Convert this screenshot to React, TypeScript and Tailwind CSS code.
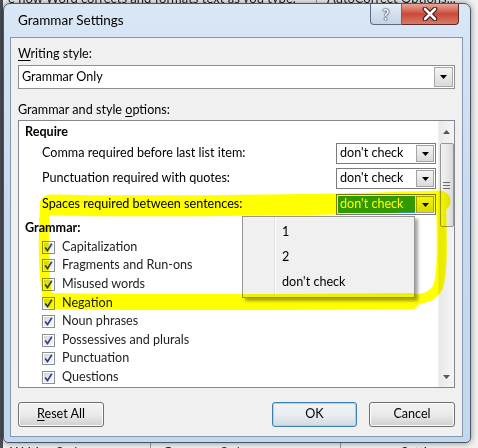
import React from 'react';

const items = [
  'Capitalization',
  'Fragments and Run-ons',
  'Misused words',
  'Negation',
  'Noun phrases',
  'Possessives and plurals',
  'Punctuation',
  'Questions',
  'Relative clauses',
];

function Tri() {
  return (
    <svg width="7" height="4" viewBox="0 0 7 4">
      <path d="M0 0h7L3.5 4z" fill="#000" />
    </svg>
  );
}

function Combo({ selected }: { selected?: boolean }) {
  return (
    <div className="w-[100px] h-[21px] flex border border-[#7b7b7b] bg-white p-px">
      <div
        className={
          selected
            ? 'flex-1 flex items-center pl-[2px] bg-[#3399ff] text-white'
            : 'flex-1 flex items-center pl-[2px] text-black'
        }
      >
        don't check
      </div>
      <div className="w-[18px] ml-px flex items-center justify-center border border-[#a3a3a3] bg-gradient-to-b from-[#f5f5f5] to-[#dadada]">
        <Tri />
      </div>
    </div>
  );
}

function CheckRow({ label }: { label: string }) {
  return (
    <div className="h-[18.6px] flex items-center pl-[23px] gap-[7px] text-[#1e1e1e]">
      <span className="w-[13px] h-[13px] border border-[#8e8f8f] bg-white p-px flex">
        <span className="flex-1 bg-gradient-to-br from-[#d3d6da] to-[#f7f7f7] flex items-center justify-center">
          <svg width="9" height="9" viewBox="0 0 9 9">
            <path d="M1.2 4.6 L3.5 7.6 L7.8 0.8" fill="none" stroke="#2c3d8e" strokeWidth="1.6" />
          </svg>
        </span>
      </span>
      <span>{label}</span>
    </div>
  );
}

function Button({ children, primary }: { children: React.ReactNode; primary?: boolean }) {
  return (
    <button
      className={
        primary
          ? 'w-[85px] h-[25px] rounded-[3px] border border-[#3c7fb1] bg-gradient-to-b from-[#f2f2f2] via-[#e8eef2] to-[#d2dbe2] shadow-[inset_0_0_0_1px_#9fd6f3]'
          : 'w-[86px] h-[25px] rounded-[3px] border border-[#707070] bg-gradient-to-b from-[#f2f2f2] via-[#ebebeb] to-[#cfcfcf] shadow-[inset_0_0_0_1px_#fcfcfc]'
      }
    >
      {children}
    </button>
  );
}

function TitleBar() {
  return (
    <div className="h-[33px] flex items-start justify-between">
      <div className="h-full flex items-center pl-[8px] text-[13.5px] text-black">Grammar Settings</div>
      <div className="flex mr-[4px]">
        <div className="w-[32px] h-[21px] rounded-bl-[4px] border border-t-0 border-[#5b6b80] bg-gradient-to-b from-[#e6eef7] via-[#d3dfec] to-[#c4d3e4] flex items-center justify-center">
          <span className="font-bold text-[15px] leading-none text-white [text-shadow:0_0_1px_#1d2836,0_0_1px_#1d2836,0_0_2px_#3c4a5c]">?</span>
        </div>
        <div className="w-[57px] h-[21px] rounded-br-[4px] border border-t-0 border-l-0 border-[#5a2a24] bg-gradient-to-b from-[#e8a596] via-[#c8493a] to-[#d9796a] flex items-center justify-center">
          <svg width="16" height="14" viewBox="0 0 16 14">
            <path d="M3 2 L13 12 M13 2 L3 12" stroke="#3b1410" strokeWidth="4.6" strokeLinecap="round" />
            <path d="M3 2 L13 12 M13 2 L3 12" stroke="#ffffff" strokeWidth="2.6" strokeLinecap="round" />
          </svg>
        </div>
      </div>
    </div>
  );
}

function Highlight() {
  return (
    <svg
      width="478"
      height="448"
      viewBox="0 0 478 448"
      className="absolute inset-0 pointer-events-none mix-blend-multiply blur-[0.5px]"
    >
      <g fill="none" stroke="#ffff00" strokeLinecap="round" strokeLinejoin="round">
        <path d="M50 205 C 150 207, 300 205, 378 203 C 410 202, 430 201, 440 201" strokeWidth="21" />
        <path d="M45 206 C 43 240, 43 275, 48 299" strokeWidth="10" />
        <path d="M52 301 C 150 303, 300 302, 412 301" strokeWidth="16" />
        <path d="M441 196 C 442 240, 443 272, 438 287 C 433 297, 422 300, 408 300" strokeWidth="10" />
      </g>
    </svg>
  );
}

export default function App() {
  return (
    <div className="relative isolate w-[478px] h-[448px] overflow-hidden bg-[#f1f1f1] font-['Lato',sans-serif] text-[12.6px]">
      <div className="absolute left-0 right-0 top-[-11px] flex text-[#222] text-[13px] whitespace-nowrap">
        <span className="pl-[8px] w-[316px]">e how Word corrects and formats text as you type.</span>
        <span className="border-l border-[#999] pl-[10px]">AutoCorrect Options...</span>
      </div>
      <div className="absolute left-0 top-0 bottom-0 w-[3px] bg-[#4b4f57]" />
      <div className="absolute left-0 right-0 top-[443px] flex text-[#222] text-[13px] whitespace-nowrap">
        <span className="pl-[10px] w-[150px]">Writing Style:</span>
        <span className="border-l border-[#999] pl-[12px] w-[190px]">Grammar Only</span>
        <span className="border-l border-[#999] pl-[60px]">Settings...</span>
      </div>

      <div className="relative ml-[3px] mt-[3px] w-[468px] h-[440px] rounded-t-[7px] rounded-b-[5px] border border-[#4a5566] bg-gradient-to-b from-[#d9e7f6] via-[#c6d9ef] to-[#c2d8ef] pl-[6px] pr-[7px] pb-[5px] shadow-[0_0_6px_rgba(0,0,0,0.45)] flex flex-col">
        <TitleBar />
        <div className="flex-1 border border-[#8497ad] bg-[#f0f0f0] px-[7px] pt-[8px] flex flex-col">
          <div className="h-[17px] flex items-center">
            <span>
              <span className="underline underline-offset-2">W</span>riting style:
            </span>
          </div>
          <div className="mt-[2px] h-[24px] flex border border-[#8e8f8f] bg-white p-px">
            <div className="flex-1 flex items-center pl-[2px]">Grammar Only</div>
            <div className="w-[19px] flex items-center justify-center border border-[#a8a8a8] bg-gradient-to-b from-[#f4f4f4] to-[#dadada]">
              <Tri />
            </div>
          </div>
          <div className="mt-[13px] h-[17px] flex items-center">
            <span>
              Grammar and style <span className="underline underline-offset-2">o</span>ptions:
            </span>
          </div>
          <div className="relative mt-px h-[268px] border border-[#828790] bg-white flex">
            <div className="flex-1 overflow-hidden">
              <div className="pl-[6px] pt-[2px] h-[20px] flex items-center font-bold">Require</div>
              <div className="mt-[2px] h-[21px] flex items-center justify-between pl-[23px] pr-[2px]">
                <span>Comma required before last list item:</span>
                <Combo />
              </div>
              <div className="mt-[4px] h-[21px] flex items-center justify-between pl-[23px] pr-[2px]">
                <span>Punctuation required with quotes:</span>
                <Combo />
              </div>
              <div className="mt-[5px] h-[21px] flex items-center justify-between pl-[23px] pr-[2px]">
                <span>Spaces required between sentences:</span>
                <Combo selected />
              </div>
              <div className="mt-[4px] h-[18px] pl-[6px] flex items-center font-bold">Grammar:</div>
              <div className="mt-[1px]">
                {items.map((it) => (
                  <CheckRow key={it} label={it} />
                ))}
              </div>
            </div>
            <div className="w-[16px] bg-gradient-to-r from-[#e9e9e9] to-[#f5f5f5] border-l border-[#f0f0f0] flex flex-col items-center">
              <div className="h-[22px] flex items-center justify-center">
                <svg width="7" height="4" viewBox="0 0 7 4">
                  <path d="M0 4h7L3.5 0z" fill="#555" />
                </svg>
              </div>
              <div className="w-[14px] h-[84px] rounded-[2px] border border-[#979797] bg-gradient-to-r from-[#f3f3f3] via-[#e8e8e8] to-[#d8d8d8] flex flex-col items-center justify-center gap-[2px]">
                <div className="w-[7px] h-px bg-[#6a6a6a]" />
                <div className="w-[7px] h-px bg-[#6a6a6a]" />
                <div className="w-[7px] h-px bg-[#6a6a6a]" />
              </div>
              <div className="flex-1" />
              <div className="h-[20px] flex items-center justify-center">
                <svg width="7" height="4" viewBox="0 0 7 4">
                  <path d="M0 0h7L3.5 4z" fill="#555" />
                </svg>
              </div>
            </div>

            <div className="absolute left-[223px] top-[95px] w-[173px] h-[82px] border border-[#979797] bg-[#f0f0f0] shadow-[3px_3px_3px_rgba(0,0,0,0.35)] flex">
              <div className="w-[32px] border-r border-[#e2e3e3] shadow-[1px_0_0_#ffffff]" />
              <div className="flex-1 pt-[3px] pl-[7px]">
                <div className="h-[25px] flex items-center">1</div>
                <div className="h-[25px] flex items-center">2</div>
                <div className="h-[25px] flex items-center">don't check</div>
              </div>
            </div>
          </div>
          <div className="mt-[14px] flex justify-between">
            <Button>
              <span className="underline underline-offset-2">R</span>eset All
            </Button>
            <div className="flex gap-[12px]">
              <Button primary>OK</Button>
              <Button>Cancel</Button>
            </div>
          </div>
        </div>
      </div>

      <Highlight />
    </div>
  );
}
